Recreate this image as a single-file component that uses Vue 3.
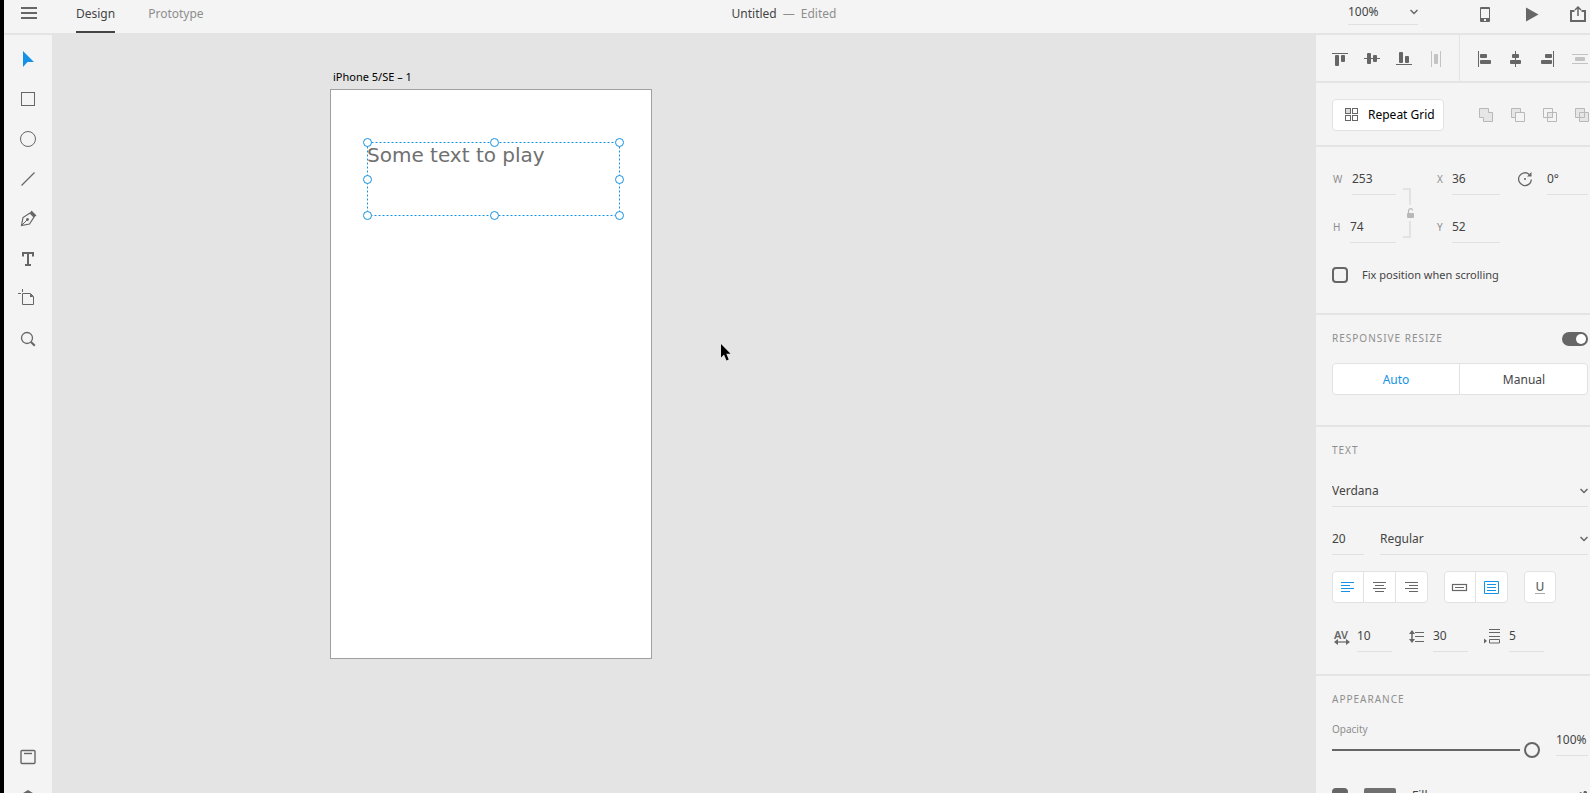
<script setup>
import { ref } from 'vue'

const tool = ref('select')
const zoom = ref('100%')
const width = ref('253')
const height = ref('74')
const posX = ref('36')
const posY = ref('52')
const rotation = ref('0°')
const fixed = ref(false)
const responsive = ref(true)
const resizeMode = ref('Auto')
const family = ref('Verdana')
const size = ref('20')
const weight = ref('Regular')
const align = ref('left')
const box = ref('area')
const tracking = ref('10')
const leading = ref('30')
const paragraph = ref('5')
const opacity = ref(100)
const opacityText = ref('100%')
const fill = ref(true)

const handles = ['nw', 'n', 'ne', 'w', 'e', 'sw', 's', 'se']

// Rectangles are [x, y, width, height] on a 24 unit grid.
const alignVertical = [
  { name: 'Align top', line: 'M4 6.5h16', bars: [[7, 8, 4, 11], [13, 8, 4, 7]] },
  { name: 'Align middle', line: 'M4 11.5h16', bars: [[7, 6, 4, 11], [13, 8, 4, 7]] },
  { name: 'Align bottom', line: 'M4 17.5h16', bars: [[7, 5, 4, 11], [13, 9, 4, 7]] },
  { name: 'Distribute horizontally', line: 'M7.5 4v16M16.5 4v16', bars: [[10, 7, 4, 10]], off: true }
]
const alignHorizontal = [
  { name: 'Align left', line: 'M6.5 4v16', bars: [[8, 7, 7, 4], [8, 13, 11, 4]] },
  { name: 'Align center', line: 'M11.5 4v16', bars: [[8, 7, 7, 4], [6, 13, 11, 4]] },
  { name: 'Align right', line: 'M17.5 4v16', bars: [[9, 7, 7, 4], [5, 13, 11, 4]] },
  { name: 'Distribute vertically', line: 'M4 7.5h16M4 16.5h16', bars: [[7, 10, 10, 4]], off: true }
]
const booleans = [
  { name: 'Add', shade: 'M5.5 5.5h9v4h4v9h-9v-4h-4z', line: '' },
  { name: 'Subtract', shade: 'M5.5 5.5h9v4h-5v5h-4z', line: 'M9.5 9.5h9v9h-9z' },
  { name: 'Intersect', shade: 'M9.5 9.5h5v5h-5z', line: 'M5.5 5.5h9v9h-9zM9.5 9.5h9v9h-9z' },
  { name: 'Exclude overlap', shade: 'M5.5 5.5h9v4h4v9h-9v-4h-4z', line: 'M14.5 9.5v5h-5M9.5 14.5v-5h5' }
]
const alignments = [
  { id: 'left', path: 'M5 7.5h13M5 10.5h9M5 13.5h13M5 16.5h9' },
  { id: 'center', path: 'M5 7.5h13M7 10.5h9M5 13.5h13M7 16.5h9' },
  { id: 'right', path: 'M5 7.5h13M9 10.5h9M5 13.5h13M9 16.5h9' }
]
</script>

<template>
  <div class="app">
    <header class="topbar">
      <div class="topbar-left">
        <button class="icon-btn menu" aria-label="Menu">
          <svg viewBox="0 0 24 24"><path d="M5 7h16M5 12h16M5 17h16" stroke="#666" stroke-width="2" /></svg>
        </button>
        <nav class="tabs">
          <a href="#design" class="tab active">Design</a>
          <a href="#prototype" class="tab">Prototype</a>
        </nav>
      </div>
      <div class="doc-title"><span class="doc-name">Untitled</span><span>—</span><span>Edited</span></div>
      <div class="topbar-right">
        <div class="picker zoom">
          <select v-model="zoom" aria-label="Zoom"><option>100%</option><option>200%</option></select>
          <svg class="chevron" viewBox="0 0 8 6"><path d="M0.5 1l3.5 3.5L7.5 1" /></svg>
        </div>
        <div class="top-actions">
          <button class="icon-btn" aria-label="Device preview">
            <svg viewBox="0 0 24 24"><rect x="6" y="5" width="10" height="15" rx="1" fill="#666" /><path d="M7 7h8v9H7z" fill="#f4f4f4" /><rect x="10" y="17" width="2" height="2" fill="#f4f4f4" /></svg>
          </button>
          <button class="icon-btn" aria-label="Play">
            <svg viewBox="0 0 24 24"><path d="M6 5.5L18.5 12.5 6 19.5z" fill="#666" /></svg>
          </button>
          <button class="icon-btn" aria-label="Share">
            <svg viewBox="0 0 24 24" fill="none" stroke="#666" stroke-width="1.5"><path d="M8.500 9H5v10h14V9H15.500" stroke-width="2" /><path d="M12 14V5M9 8l3-3 3 3" /></svg>
          </button>
        </div>
      </div>
    </header>

    <main class="workspace">
      <aside class="tools">
        <button class="tool" aria-label="Select" @click="tool = 'select'">
          <svg viewBox="0 0 24 24"><path d="M7 4v16l4.500-5H18z" :fill="tool === 'select' ? '#1592e6' : '#666'" /></svg>
        </button>
        <button class="tool" aria-label="Rectangle" @click="tool = 'rectangle'">
          <svg viewBox="0 0 24 24"><rect x="5.500" y="5.500" width="13" height="13" fill="none" stroke="#666" /></svg>
        </button>
        <button class="tool" aria-label="Ellipse" @click="tool = 'ellipse'">
          <svg viewBox="0 0 24 24"><circle cx="12" cy="12" r="7.500" fill="none" stroke="#666" /></svg>
        </button>
        <button class="tool" aria-label="Line" @click="tool = 'line'">
          <svg viewBox="0 0 24 24"><path d="M5.500 18.500l13-13" stroke="#666" stroke-width="1.200" /></svg>
        </button>
        <button class="tool" aria-label="Pen" @click="tool = 'pen'">
          <svg viewBox="0 0 24 24"><path d="M5.500 18.500l1.500-8 7-4.500 4 4-4.500 7z" fill="none" stroke="#666" stroke-width="1.200" /><path d="M5.500 18.500l5.500-5.500" stroke="#666" /><circle cx="11.500" cy="12.500" r="1.400" fill="#666" /><path d="M14 6l1.500-2.500 5 5L18 10.200z" fill="#666" /></svg>
        </button>
        <button class="tool" aria-label="Text" @click="tool = 'text'">
          <svg viewBox="0 0 24 24"><path d="M7 9.500V6h10v3.500M12 6v12M9 18h6" fill="none" stroke="#666" stroke-width="2" /></svg>
        </button>
        <button class="tool" aria-label="Artboard" @click="tool = 'artboard'">
          <svg viewBox="0 0 24 24"><path d="M2 6.500h3M6.500 2v3M6.500 6.500h8l3 3v8h-11z" fill="none" stroke="#666" /><path d="M14 6.500v3.500h3.500z" fill="#666" /></svg>
        </button>
        <button class="tool" aria-label="Zoom" @click="tool = 'zoom'">
          <svg viewBox="0 0 24 24"><circle cx="11" cy="11" r="5.500" fill="none" stroke="#666" stroke-width="1.300" /><path d="M15 15l3.800 3.800" stroke="#666" stroke-width="2" /></svg>
        </button>
        <div class="tools-bottom">
          <button class="tool" aria-label="Assets">
            <svg viewBox="0 0 24 24"><rect x="5" y="5.500" width="14" height="13" rx="1" fill="none" stroke="#666" stroke-width="1.400" /><path d="M8 8.500h8" stroke="#666" stroke-width="1.400" /></svg>
          </button>
          <button class="tool" aria-label="Layers">
            <svg viewBox="0 0 24 24"><path d="M12 5l8 5-8 5-8-5z" fill="#666" /></svg>
          </button>
        </div>
      </aside>

      <section class="canvas">
        <div class="artboard-wrap">
          <div class="artboard-name">iPhone 5/SE – 1</div>
          <div class="artboard">
            <div class="selection">
              <svg class="outline" aria-hidden="true"><rect x="0.500" y="0.500" width="252" height="73" /></svg>
              <p>Some text to play</p>
              <i v-for="h in handles" :key="h" class="handle" :class="h"></i>
            </div>
          </div>
        </div>
        <svg class="cursor" viewBox="0 0 10 17"><path d="M0 0v13.500l3-3 2.500 6 2.200-1L5.300 9.700H9.500z" /></svg>
      </section>

      <aside class="panel">
        <section class="aligns">
          <div class="align-group">
            <button v-for="a in alignVertical" :key="a.name" class="icon-btn" :class="{ off: a.off }" :aria-label="a.name">
              <svg viewBox="0 0 24 24"><path :d="a.line" stroke="currentColor" /><rect v-for="(b, i) in a.bars" :key="i" :x="b[0]" :y="b[1]" :width="b[2]" :height="b[3]" rx="1" fill="currentColor" /></svg>
            </button>
          </div>
          <div class="align-group">
            <button v-for="a in alignHorizontal" :key="a.name" class="icon-btn" :class="{ off: a.off }" :aria-label="a.name">
              <svg viewBox="0 0 24 24"><path :d="a.line" stroke="currentColor" /><rect v-for="(b, i) in a.bars" :key="i" :x="b[0]" :y="b[1]" :width="b[2]" :height="b[3]" rx="1" fill="currentColor" /></svg>
            </button>
          </div>
        </section>

        <section class="repeat">
          <button class="repeat-btn">
            <svg viewBox="0 0 14 14" fill="none" stroke="#666"><rect x="0.500" y="0.500" width="5" height="5" fill="#ddd" /><rect x="7.500" y="0.500" width="5" height="5" /><rect x="0.500" y="7.500" width="5" height="5" /><rect x="7.500" y="7.500" width="5" height="5" /></svg>
            <span>Repeat Grid</span>
          </button>
          <div class="booleans">
            <button v-for="b in booleans" :key="b.name" class="icon-btn" :aria-label="b.name">
              <svg viewBox="0 0 24 24" stroke="#b8b8b8" fill="none"><path :d="b.shade" fill="#e6e6e6" /><path :d="b.line" /></svg>
            </button>
          </div>
        </section>

        <section class="transform">
          <div class="geometry">
            <label class="field"><span class="key w">W</span><input v-model="width"></label>
            <button class="link" aria-label="Lock aspect ratio">
              <svg viewBox="0 0 12 50"><path d="M0 1h7v16M0 49h7V33" fill="none" stroke="#e2e2e2" stroke-width="2" /><rect x="4" y="25" width="7" height="5" rx="1" fill="#b8b8b8" /><path d="M5.500 25v-2a2 2 0 0 1 4-.5" fill="none" stroke="#b8b8b8" stroke-width="1.200" /></svg>
            </button>
            <label class="field"><span class="key">X</span><input v-model="posX"></label>
            <label class="field angle">
              <svg viewBox="0 0 16 16" fill="none" stroke="#666" stroke-width="1.300"><path d="M12.300 3.400A6.400 6.400 0 1 0 14.400 8.500" /><path d="M14.500 1v4.500H10z" fill="#666" stroke="none" /><circle cx="8" cy="8" r="1" fill="#666" stroke="none" /></svg>
              <input v-model="rotation" aria-label="Rotation">
            </label>
            <label class="field second"><span class="key h">H</span><input v-model="height"></label>
            <label class="field"><span class="key">Y</span><input v-model="posY"></label>
          </div>
          <label class="check"><input v-model="fixed" type="checkbox"><span>Fix position when scrolling</span></label>
        </section>

        <section class="responsive">
          <label class="head"><span class="title">RESPONSIVE RESIZE</span><input v-model="responsive" class="switch" type="checkbox"></label>
          <div class="segments wide">
            <button v-for="m in ['Auto', 'Manual']" :key="m" :class="{ on: resizeMode === m }" @click="resizeMode = m">{{ m }}</button>
          </div>
        </section>

        <section class="text">
          <h2 class="title">TEXT</h2>
          <div class="picker">
            <select v-model="family" aria-label="Font family"><option>Verdana</option><option>Arial</option></select>
            <svg class="chevron" viewBox="0 0 8 6"><path d="M0.500 1l3.500 3.500L7.500 1" /></svg>
          </div>
          <div class="font-row">
            <div class="field size"><input v-model="size" aria-label="Font size"></div>
            <div class="picker">
              <select v-model="weight" aria-label="Font weight"><option>Regular</option><option>Bold</option></select>
              <svg class="chevron" viewBox="0 0 8 6"><path d="M0.500 1l3.500 3.500L7.500 1" /></svg>
            </div>
          </div>
          <div class="formats">
            <div class="segments">
              <button v-for="a in alignments" :key="a.id" :class="{ on: align === a.id }" :aria-label="'Align text ' + a.id" @click="align = a.id">
                <svg viewBox="0 0 24 24"><path :d="a.path" stroke="currentColor" /></svg>
              </button>
            </div>
            <div class="segments">
              <button :class="{ on: box === 'point' }" aria-label="Point text" @click="box = 'point'">
                <svg viewBox="0 0 24 24" fill="none" stroke="currentColor"><rect x="4.500" y="9.500" width="14" height="6" stroke-width="1.200" /><path d="M7 12.500h9" /></svg>
              </button>
              <button :class="{ on: box === 'area' }" aria-label="Area text" @click="box = 'area'">
                <svg viewBox="0 0 24 24" fill="none" stroke="currentColor"><path d="M4.500 6.500h14v12h-14zM7 9.500h9M7 12.500h9M7 15.500h9" /></svg>
              </button>
            </div>
            <div class="segments">
              <button class="underline" aria-label="Underline"><span>U</span></button>
            </div>
          </div>
          <div class="spacings">
            <label class="field spacing">
              <span class="av"><span>AV</span><svg viewBox="0 0 16 6"><path d="M2 3h12" stroke="#666" stroke-width="1.200" /><path d="M0 3l4-3v6zM16 3l-4-3v6z" fill="#666" /></svg></span>
              <input v-model="tracking" aria-label="Character spacing">
            </label>
            <label class="field spacing">
              <svg viewBox="0 0 18 18"><path d="M4 4v10" stroke="#666" stroke-width="1.500" /><path d="M4 3l3 4H1zM4 16l3-4H1z" fill="#666" /><path d="M7 5.500h9M7 9.500h9M7 14.500h9" stroke="#666" /></svg>
              <input v-model="leading" aria-label="Line spacing">
            </label>
            <label class="field spacing">
              <svg viewBox="0 0 18 18"><path d="M5 2.500h11M5 5.500h11M5 9.500h11" stroke="#666" /><path d="M5.500 12.500h10v3.500h-10z" fill="none" stroke="#666" /><path d="M0 11.500l3 2.500-3 2.500z" fill="#666" /></svg>
              <input v-model="paragraph" aria-label="Paragraph spacing">
            </label>
          </div>
        </section>

        <section class="appearance">
          <h2 class="title">APPEARANCE</h2>
          <div class="opacity">
            <label class="slider"><span>Opacity</span><input v-model="opacity" type="range" min="0" max="100"></label>
            <div class="field percent"><input v-model="opacityText" aria-label="Opacity value"></div>
          </div>
          <div class="fill-row">
            <div class="check"><input id="fill" v-model="fill" type="checkbox"><button class="swatch" aria-label="Fill color"></button><label for="fill">Fill</label></div>
            <button class="dropper" aria-label="Pick color"><svg viewBox="0 0 12 12"><path d="M3 3l2-1 2 2 1-3h2l1 1v3L9 6 10 8 8 9 6 7l-4 5H0l1-3 4-4z" fill="#666" /></svg></button>
          </div>
        </section>
      </aside>
    </main>
  </div>
</template>

<style>
body {
  margin: 0;
}
</style>

<style scoped>
* {
  box-sizing: border-box;
}
.app {
  height: 100vh;
  display: flex;
  flex-direction: column;
  overflow: hidden;
  border-left: 4px solid #000;
  background: #f4f4f4;
  color: #444;
  font: 12px/16px "Noto Sans", "Open Sans", sans-serif;
}
button, input, select {
  font: inherit;
  color: inherit;
  margin: 0;
  padding: 0;
  border: 0;
  background: none;
  outline: none;
}
svg {
  display: block;
  flex: none;
}
h2, p {
  margin: 0;
}
.icon-btn {
  width: 32px;
  height: 32px;
  flex: none;
  display: grid;
  place-items: center;
  color: #666;
}
.icon-btn svg, .tool svg, .segments svg {
  width: 24px;
  height: 24px;
}
.icon-btn.off {
  color: #c3c3c3;
}

/* Top bar */
.topbar {
  flex: none;
  height: 35px;
  display: grid;
  grid-template-columns: 1fr auto 1fr;
  border-bottom: 2px solid #e4e4e4;
}
.topbar-left, .tabs {
  display: flex;
}
.menu {
  width: 48px;
  height: 26px;
}
.tabs {
  padding-left: 24px;
  gap: 33px;
}
.tab {
  height: 33px;
  padding-top: 5px;
  color: #8e8e8e;
  text-decoration: none;
  border-bottom: 2px solid transparent;
  line-height: 18px;
}
.tab.active {
  color: #444;
  border-color: #444;
}
.doc-title {
  display: flex;
  gap: 6px;
  padding-top: 5px;
  padding-right: 26px;
  line-height: 18px;
  color: #8e8e8e;
}
.doc-name {
  color: #444;
}
.topbar-right {
  display: flex;
  justify-content: flex-end;
}
.top-actions {
  display: flex;
  gap: 14px;
  margin-right: -4px;
  height: 27px;
  align-items: center;
}
.picker {
  position: relative;
  height: 32px;
  flex: 1;
  display: flex;
  align-items: center;
  border-bottom: 1px solid #e0e0e0;
}
.picker select {
  appearance: none;
  width: 100%;
  height: 100%;
}
.zoom {
  flex: none;
  width: 70px;
  height: 25px;
  margin-right: 52px;
}
.chevron {
  position: absolute;
  right: 0;
  width: 8px;
  height: 6px;
  fill: none;
  stroke: #666;
  stroke-width: 1.5;
  pointer-events: none;
}

/* Workspace */
.workspace {
  flex: 1;
  min-height: 0;
  display: flex;
}
.tools {
  flex: none;
  width: 48px;
  display: flex;
  flex-direction: column;
  padding-top: 4px;
}
.tool {
  width: 48px;
  height: 40px;
  flex: none;
  display: grid;
  place-items: center;
}
.tools-bottom {
  margin-top: auto;
  margin-bottom: -24px;
}
.canvas {
  flex: 1;
  min-width: 0;
  position: relative;
  background: #e4e4e4;
}
.artboard-wrap {
  position: absolute;
  left: 278px;
  top: 34px;
}
.artboard-name {
  height: 20px;
  padding-left: 3px;
  color: #000;
  font-size: 11px;
}
.artboard {
  position: relative;
  width: 322px;
  height: 570px;
  border: 1px solid #a0a0a0;
  background: #fff;
}
.selection {
  position: absolute;
  left: 36px;
  top: 52px;
  width: 253px;
  height: 74px;
  font: 20px/26px Verdana, "DejaVu Sans", sans-serif;
  color: #707070;
}
.outline {
  position: absolute;
  inset: 0;
  width: 100%;
  height: 100%;
  fill: none;
  stroke: #1592e6;
  stroke-dasharray: 2 2;
}
.handle {
  position: absolute;
  width: 9px;
  height: 9px;
  border: 1px solid #1592e6;
  border-radius: 50%;
  background: #fff;
}
.nw, .n, .ne { top: -4px; }
.sw, .s, .se { bottom: -4px; }
.nw, .w, .sw { left: -4px; }
.ne, .e, .se { right: -4px; }
.n, .s { left: calc(50% - 4px); }
.w, .e { top: calc(50% - 4px); }
.cursor {
  position: absolute;
  left: 669px;
  top: 309px;
  width: 10px;
  height: 17px;
}

/* Property panel */
.panel {
  flex: none;
  width: 274px;
  overflow: hidden;
  background: #f4f4f4;
}
.panel > section {
  padding-left: 16px;
  padding-right: 2px;
  border-bottom: 2px solid #e4e4e4;
}
.panel > .aligns {
  display: flex;
  height: 48px;
  padding: 0;
}
.align-group {
  display: flex;
  align-items: center;
  padding: 1px 7px 0 8px;
}
.align-group:first-child {
  border-right: 1px solid #e4e4e4;
}
.repeat {
  display: flex;
  align-items: center;
  justify-content: space-between;
  height: 64px;
  padding-top: 2px;
}
.repeat-btn {
  width: 112px;
  height: 32px;
  flex: none;
  display: flex;
  align-items: center;
  gap: 9px;
  padding-left: 12px;
  border: 1px solid #e2e2e2;
  border-radius: 4px;
  background: #fff;
  color: #000;
  white-space: nowrap;
}
.repeat-btn svg {
  width: 14px;
  height: 14px;
}
.booleans {
  display: flex;
  margin-right: -10px;
}
.transform {
  padding-top: 16px;
  padding-bottom: 30px;
}
.geometry {
  display: grid;
  grid-template-columns: 64px 40px 64px 1fr;
  row-gap: 16px;
}
.field {
  height: 32px;
  display: flex;
  align-items: center;
  min-width: 0;
}
.field input {
  flex: 1;
  width: 0;
  min-width: 0;
  height: 100%;
  border-bottom: 1px solid #e0e0e0;
}
.key {
  width: 16px;
  padding-left: 1px;
  font-size: 10px;
  color: #8e8e8e;
}
.key.w { width: 20px; }
.key.h { width: 18px; }
.second { grid-column: 1; }
.second + .field { grid-column: 3; }
.link {
  grid-column: 2;
  grid-row: 1 / 3;
  padding-left: 7px;
  padding-top: 20px;
  display: flex;
  align-items: center;
}
.link svg {
  width: 12px;
  height: 50px;
}
.angle {
  padding-left: 17px;
  gap: 14px;
}
.angle svg {
  width: 16px;
  height: 16px;
}
.check {
  display: flex;
  align-items: center;
  gap: 14px;
}
.transform .check {
  margin-top: 24px;
  font-size: 11px;
}
.check input {
  appearance: none;
  width: 16px;
  height: 16px;
  border: 2px solid #666;
  border-radius: 4px;
}
.check input:checked {
  background: #666;
}
.check input:checked::after {
  content: "";
  display: block;
  width: 6px;
  height: 10px;
  margin-left: 4px;
  border: solid #fff;
  border-width: 0 2px 2px 0;
  transform: rotate(40deg);
}
.responsive {
  padding-top: 16px;
  padding-bottom: 30px;
}
.head {
  display: flex;
  justify-content: space-between;
  align-items: center;
}
.title {
  padding-bottom: 2px;
  font-size: 10px;
  font-weight: 400;
  line-height: 14px;
  letter-spacing: 1px;
  color: #8e8e8e;
}
.switch {
  appearance: none;
  width: 26px;
  height: 14px;
  padding: 2px;
  border-radius: 7px;
  background: #666;
  display: flex;
}
.switch::before {
  content: "";
  width: 10px;
  height: 10px;
  border-radius: 50%;
  background: #fff;
}
.switch:checked::before {
  margin-left: auto;
}
.segments {
  display: flex;
  border: 1px solid #e2e2e2;
  border-radius: 4px;
  background: #fff;
  overflow: hidden;
}
.segments button {
  height: 30px;
  min-width: 30px;
  flex: 1;
  display: grid;
  place-items: center;
  color: #666;
}
.segments button + button {
  min-width: 32px;
  padding-left: 1px;
  border-left: 1px solid #e2e2e2;
}
.segments.wide {
  margin-top: 16px;
}
.segments.wide button {
  padding-top: 2px;
  color: #444;
}
.segments button.on, .segments.wide button.on {
  color: #1592e6;
}
.text {
  padding-top: 16px;
  padding-bottom: 22px;
}
.text > .picker {
  margin-top: 16px;
}
.font-row {
  display: flex;
  gap: 16px;
  margin-top: 16px;
}
.size {
  width: 32px;
}
.formats {
  display: flex;
  gap: 16px;
  margin-top: 16px;
}
.underline span {
  width: 10px;
  height: 13px;
  line-height: 12px;
  font-weight: 500;
  border-bottom: 1px solid #aaa;
}
.spacings {
  display: flex;
  gap: 16px;
  margin-top: 17px;
}
.spacing {
  width: 60px;
  gap: 7px;
}
.spacing > svg {
  width: 18px;
  height: 18px;
}
.av {
  width: 18px;
  padding-left: 2px;
  padding-top: 2px;
  font-size: 11px;
  font-weight: 600;
  line-height: 9px;
  color: #666;
}
.av svg {
  width: 16px;
  height: 6px;
}
.appearance {
  padding-top: 16px;
}
.opacity {
  display: flex;
  justify-content: space-between;
  margin-top: 16px;
}
.slider {
  width: 208px;
  display: flex;
  flex-direction: column;
  gap: 8px;
  font-size: 10px;
  line-height: 10px;
  color: #8e8e8e;
}
.slider input {
  appearance: none;
  width: 100%;
  height: 16px;
}
.slider input::-webkit-slider-runnable-track {
  height: 2px;
  background: #666;
}
.slider input::-webkit-slider-thumb {
  appearance: none;
  width: 16px;
  height: 16px;
  margin-top: -7px;
  border: 2px solid #666;
  border-radius: 50%;
  background: #f4f4f4;
  box-shadow: 0 0 0 4px #f4f4f4;
}
.percent {
  width: 32px;
}
.fill-row {
  display: flex;
  justify-content: space-between;
  margin-top: 30px;
}
.fill-row .check {
  gap: 16px;
}
.swatch {
  width: 32px;
  height: 16px;
  border-radius: 2px;
  background: #707070;
}
.dropper svg {
  width: 12px;
  height: 12px;
}
</style>
